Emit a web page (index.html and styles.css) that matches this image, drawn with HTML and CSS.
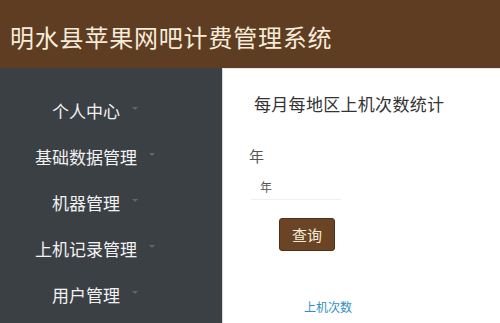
FILE: index.html
```html
<!DOCTYPE html>
<html lang="zh-CN">
<head>
  <meta charset="UTF-8">
  <title>明水县苹果网吧计费管理系统</title>
  <link rel="stylesheet" href="styles.css">
</head>
<body>

<div class="header">
  <h1>明水县苹果网吧计费管理系统</h1>
</div>

<div class="layout">
  <!-- Left Menu -->
  <div class="sidebar">
    <div class="menu-item">个人中心<span class="caret"></span></div>
    <div class="menu-item">基础数据管理<span class="caret"></span></div>
    <div class="menu-item">机器管理<span class="caret"></span></div>
    <div class="menu-item">上机记录管理<span class="caret"></span></div>
    <div class="menu-item">用户管理<span class="caret"></span></div>
  </div>

  <!-- Main -->
  <div class="content">
    <h2>每月每地区上机次数统计</h2>
    <div class="form-group">
      <label for="year">年</label>
      <input type="text" id="year" placeholder="年">
    </div>
    <button class="query-btn">查询</button>
    <div class="chart-legend">上机次数</div>
  </div>
</div>

</body>
</html>
```

FILE: styles.css
```css
* { box-sizing: border-box; }

body {
  font-family: "Noto Sans CJK SC", "Noto Sans", sans-serif;
  margin: 0;
  width: 500px;
  height: 323px;
  overflow: hidden;
  background: #ffffff;
}

.header {
  height: 68px;
  background: #5e3d22;
  display: flex;
  align-items: center;
  padding-left: 10px;
  padding-top: 4px;
}

.header h1 {
  margin: 0;
  font-size: 24px;
  font-weight: normal;
  color: #f6ecd9;
  letter-spacing: 0.8px;
}

.layout {
  display: flex;
  height: 255px;
}

.sidebar {
  width: 222px;
  background: #3b4045;
  padding-top: 20px;
  padding-right: 38px;
  display: flex;
  flex-direction: column;
}

.menu-item {
  height: 45.8px;
  display: flex;
  align-items: center;
  justify-content: center;
  font-size: 17px;
  color: #f2f2f2;
}

.caret {
  display: inline-block;
  width: 0;
  height: 0;
  margin-left: 12px;
  margin-right: -6px;
  border-left: 3px solid transparent;
  border-right: 3px solid transparent;
  border-top: 3px solid #62676c;
  margin-top: -4px;
}

.content {
  flex: 1;
  padding: 22px 0 0 26px;
  border-top: 1px solid #ece8e2;
  border-left: 1px solid #d8d8d8;
}

.content h2 {
  margin: 0 0 29px 5px;
  font-size: 17px;
  font-weight: normal;
  color: #333;
  letter-spacing: 0.3px;
}

.form-group label {
  display: block;
  font-size: 15px;
  color: #555;
  margin-bottom: 7px;
}

.form-group input {
  width: 90px;
  height: 26px;
  margin-left: 2px;
  padding: 0 9px;
  font-family: inherit;
  font-size: 12px;
  border: none;
  border-bottom: 1px solid #f0f0f0;
  outline: none;
}

.form-group input::placeholder {
  color: #555;
}

.query-btn {
  display: block;
  margin: 18px 0 0 30px;
  width: 56px;
  height: 33px;
  background: #6b4426;
  color: #f6ecd9;
  font-family: inherit;
  font-size: 15px;
  border: 1px solid #4e301a;
  border-radius: 3px;
}

.chart-legend {
  margin: 47px 0 0 55px;
  font-size: 12px;
  color: #2f8fc6;
}
```
